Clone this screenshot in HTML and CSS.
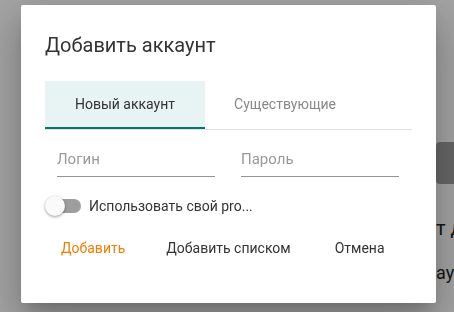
FILE: index.html
```html
<!DOCTYPE html>
<html>
<head>
  <meta charset="UTF-8">
  <title>Добавить аккаунт</title>
  <link rel="stylesheet" href="styles.css">
</head>
<body>
  <div class="page">
    <div class="page-btn"></div>
    <div class="page-line big">т д</div>
    <div class="page-line">аун</div>
  </div>
  <div class="overlay"></div>

  <div class="dialog">
    <h2 class="dialog-title">Добавить аккаунт</h2>
    <div class="tabs">
      <div class="tab active">Новый аккаунт</div>
      <div class="tab">Существующие</div>
    </div>
    <div class="fields">
      <input class="field" type="text" placeholder="Логин">
      <input class="field" type="password" placeholder="Пароль">
    </div>
    <label class="switch-row">
      <span class="switch"><span class="thumb"></span></span>
      <span class="switch-label">Использовать свой pro...</span>
    </label>
    <div class="actions">
      <button class="btn primary">Добавить</button>
      <button class="btn">Добавить списком</button>
      <button class="btn">Отмена</button>
    </div>
  </div>
</body>
</html>
```

FILE: styles.css
```css
/* Страница под диалогом */
body {
  margin: 0;
  width: 454px;
  height: 312px;
  overflow: hidden;
  background: #fafafa;
  font-family: Roboto, "Liberation Sans", sans-serif;
}
.page {
  display: flex;
  flex-direction: column;
  width: 18px;
  overflow: hidden;
  padding: 142px 0 0 436px;
  color: #222;
}
.page-btn {
  width: 90px;
  height: 42px;
  border-radius: 4px;
  background: #9e9e9e;
}
.page-line {
  font-size: 18px;
  margin-top: 22px;
  white-space: nowrap;
}
.page-line.big {
  font-size: 20px;
  margin-top: 32px;
}
.overlay {
  position: fixed;
  inset: 0;
  background: rgba(0, 0, 0, 0.35);
}

/* Диалог */
.dialog {
  position: fixed;
  left: 21px;
  top: 5px;
  width: 415px;
  height: 298px;
  box-sizing: border-box;
  padding: 24px;
  background: #fff;
  border-radius: 2px;
  box-shadow: 0 11px 15px -7px rgba(0,0,0,.2), 0 24px 38px 3px rgba(0,0,0,.14), 0 9px 46px 8px rgba(0,0,0,.12);
}
.dialog-title {
  margin: 0 0 20px;
  font-size: 20px;
  font-weight: 400;
  line-height: 32px;
  color: #333;
}
.tabs {
  display: flex;
  border-bottom: 1px solid #e0e0e0;
}
.tab {
  width: 160px;
  height: 46px;
  line-height: 46px;
  text-align: center;
  font-size: 14px;
  color: #888;
  border-bottom: 2px solid transparent;
}
.tab.active {
  background: #e8f3f3;
  color: #333;
  border-bottom-color: #00796b;
}
.fields {
  display: flex;
  gap: 26px;
  padding: 14px 12px 0;
}
.field {
  width: 158px;
  box-sizing: border-box;
  border: none;
  border-bottom: 1px solid #949494;
  padding: 6px 0 8px;
  font: 15px Roboto, "Liberation Sans", sans-serif;
  color: #333;
  outline: none;
}
.field::placeholder {
  color: #999;
}
.switch-row {
  display: flex;
  align-items: center;
  gap: 8px;
  margin-top: 19px;
  font-size: 14px;
  color: #333;
}
.switch {
  position: relative;
  width: 36px;
  height: 20px;
  display: flex;
  align-items: center;
}
.switch::before {
  content: "";
  margin-left: 3px;
  width: 33px;
  height: 14px;
  border-radius: 7px;
  background: #9e9e9e;
}
.thumb {
  position: absolute;
  left: 0;
  top: 0;
  width: 20px;
  height: 20px;
  border-radius: 50%;
  background: #fafafa;
  box-shadow: 0 1px 3px rgba(0,0,0,.4);
}
.actions {
  display: flex;
  gap: 9px;
  margin-top: 14px;
}
.btn {
  height: 36px;
  padding: 0 16px;
  border: none;
  background: none;
  font: 14px Roboto, "Liberation Sans", sans-serif;
  color: #333;
  cursor: pointer;
}
.btn:last-child {
  margin-left: 3px;
}
.btn.primary {
  color: #f57c00;
}
```
